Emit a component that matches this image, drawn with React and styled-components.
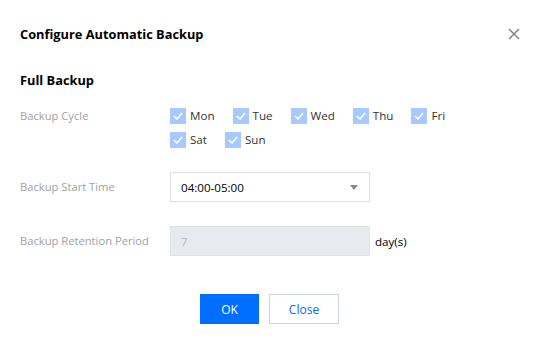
import styled, { createGlobalStyle } from "styled-components";

const GlobalStyle = createGlobalStyle`
  html, body {
    margin: 0;
    padding: 0;
    background: #fff;
    font-family: "Open Sans", "Noto Sans", sans-serif;
    color: #000;
  }
`;

const Dialog = styled.div`
  width: 542px;
  height: 344px;
  box-sizing: border-box;
  padding: 24px 20px 20px;
  background: #fff;
`;

const Header = styled.div`
  display: flex;
  align-items: center;
  justify-content: space-between;
  height: 20px;
`;

const Title = styled.h3`
  margin: 0;
  font-size: 12.8px;
  font-weight: 700;
  line-height: 20px;
  color: #000;
`;

const CloseIcon = styled.button`
  width: 14px;
  height: 14px;
  padding: 0;
  margin-right: 1px;
  border: none;
  background: none;
  display: flex;
  align-items: center;
  justify-content: center;
  cursor: pointer;
`;

const SectionTitle = styled.h4`
  margin: 26px 0 18px;
  font-size: 12.8px;
  font-weight: 700;
  line-height: 20px;
`;

const Form = styled.div`
  display: flex;
  flex-direction: column;
  gap: 24px;
`;

const Row = styled.div`
  display: grid;
  grid-template-columns: 150px 1fr;
  align-items: ${(p) => (p.$top ? "start" : "center")};
`;

const Label = styled.label`
  font-size: 11.2px;
  line-height: 16px;
  color: #a2a2a2;
`;

const Days = styled.div`
  display: flex;
  flex-wrap: wrap;
  row-gap: 8px;
  width: 300px;
`;

const Day = styled.label`
  display: flex;
  align-items: center;
  gap: 4px;
  margin-right: 18px;
  font-size: 11.6px;
  line-height: 16px;
  color: #333;
`;

const Box = styled.span`
  width: 16px;
  height: 16px;
  background: #a6cafd;
  display: flex;
  align-items: center;
  justify-content: center;
`;

const Control = styled.div`
  display: flex;
  align-items: center;
  gap: 5px;
`;

const Field = styled.div`
  width: 200px;
  height: 30px;
  box-sizing: border-box;
  border: 1px solid ${(p) => (p.$disabled ? "#dfe2e6" : "#dcdfe3")};
  background: ${(p) => (p.$disabled ? "#e7eaef" : "#fff")};
  color: ${(p) => (p.$disabled ? "#b4b8bf" : "#000")};
  padding: 0 10px;
  display: flex;
  align-items: center;
  justify-content: space-between;
  font-size: 11.6px;
`;

const Arrow = styled.span`
  width: 0;
  height: 0;
  border-left: 4px solid transparent;
  border-right: 4px solid transparent;
  border-top: 5px solid #888;
  margin-right: 1px;
`;

const Unit = styled.span`
  font-size: 11.6px;
  color: #000;
`;

const Footer = styled.div`
  display: flex;
  justify-content: center;
  gap: 10px;
  margin-top: 38px;
  padding-right: 3px;
`;

const Button = styled.button`
  height: 30px;
  min-width: ${(p) => (p.$primary ? "59px" : "70px")};
  box-sizing: border-box;
  padding: 0 16px;
  font-family: inherit;
  font-size: 12px;
  border: 1px solid ${(p) => (p.$primary ? "#006eff" : "#cfd5de")};
  background: ${(p) => (p.$primary ? "#006eff" : "#fff")};
  color: ${(p) => (p.$primary ? "#fff" : "#006eff")};
  cursor: pointer;
`;

const days = ["Mon", "Tue", "Wed", "Thu", "Fri", "Sat", "Sun"];

const Check = () => (
  <svg width="10" height="8" viewBox="0 0 10 8">
    <path d="M1 4l3 3 5-6" fill="none" stroke="#fff" strokeWidth="1.6" />
  </svg>
);

export default function App() {
  return (
    <Dialog>
      <GlobalStyle />
      <Header>
        <Title>Configure Automatic Backup</Title>
        <CloseIcon aria-label="close">
          <svg width="12" height="12" viewBox="0 0 12 12">
            <path d="M1 1l10 10M11 1L1 11" stroke="#888" strokeWidth="1.6" />
          </svg>
        </CloseIcon>
      </Header>
      <SectionTitle>Full Backup</SectionTitle>
      <Form>
        <Row $top>
          <Label>Backup Cycle</Label>
          <Days>
            {days.map((d) => (
              <Day key={d}>
                <Box>
                  <Check />
                </Box>
                {d}
              </Day>
            ))}
          </Days>
        </Row>
        <Row>
          <Label>Backup Start Time</Label>
          <Control>
            <Field>
              04:00-05:00
              <Arrow />
            </Field>
          </Control>
        </Row>
        <Row>
          <Label>Backup Retention Period</Label>
          <Control>
            <Field $disabled>7</Field>
            <Unit>day(s)</Unit>
          </Control>
        </Row>
      </Form>
      <Footer>
        <Button $primary>OK</Button>
        <Button>Close</Button>
      </Footer>
    </Dialog>
  );
}
